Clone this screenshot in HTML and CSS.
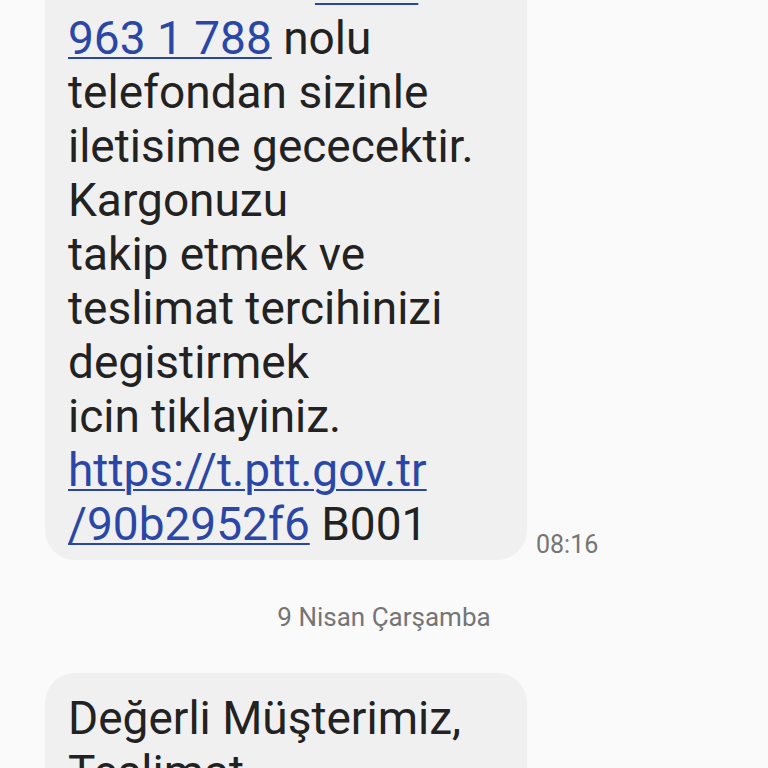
FILE: index.html
```html
<!DOCTYPE html>
<html lang="tr">
<head>
<meta charset="utf-8">
<link rel="stylesheet" href="styles.css">
</head>
<body>
<div class="thread">
  <div class="row">
    <div class="bubble">temsilcimiz <a class="link">0850</a><br><a class="link">963 1 788</a> nolu<br>telefondan sizinle<br>iletisime gececektir.<br>Kargonuzu<br>takip etmek ve<br>teslimat tercihinizi<br>degistirmek<br>icin tiklayiniz.<br><a class="link">https://t.ptt.gov.tr<br>/90b2952f6</a> B001</div>
    <span class="time">08:16</span>
  </div>
  <div class="date">9 Nisan Çarşamba</div>
  <div class="row">
    <div class="bubble">Değerli Müşterimiz,<br>Teslimat</div>
  </div>
</div>
</body>
</html>
```

FILE: styles.css
```css
html, body {
  margin: 0;
  padding: 0;
  background: #fafafa;
  overflow: hidden;
  height: 768px;
}
.thread {
  margin-top: -61px;
  display: flex;
  flex-direction: column;
  font-family: Roboto, "Noto Sans", sans-serif;
}
.row {
  display: flex;
  align-items: flex-end;
  gap: 9px;
  padding-left: 45px;
}
.bubble {
  box-sizing: border-box;
  width: 482px;
  background: #f0f0f0;
  border-radius: 30px;
  padding: 18px 23px 9px;
  font-size: 46px;
  line-height: 54px;
  color: #222222;
  white-space: nowrap;
}
.link {
  color: #2a47a8;
  text-decoration: underline;
  text-decoration-thickness: 2px;
  text-underline-offset: 3px;
}
.time {
  font-size: 25px;
  line-height: 30px;
  color: #757575;
}
.date {
  text-align: center;
  font-size: 26px;
  line-height: 30px;
  color: #757575;
  margin: 42px 0 41px;
}
```
